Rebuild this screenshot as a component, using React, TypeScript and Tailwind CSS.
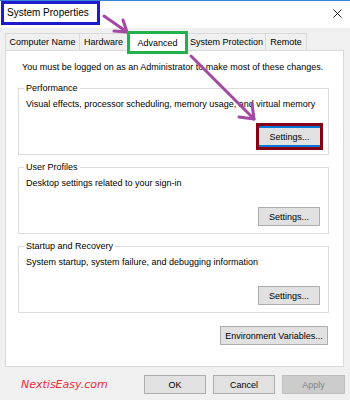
const FONT = "font-['Liberation_Sans',Arial,sans-serif]";

const TABS = [
  { label: 'Computer Name', w: 'w-[75px]' },
  { label: 'Hardware', w: 'w-[49px]' },
];

function Tab({ label, w }: { label: string; w: string }) {
  return (
    <div className={`${w} h-[17px] -ml-px first:ml-0 flex items-center justify-center bg-[#f0f0f0] border border-b-0 border-[#d9d9d9] text-[9px] leading-[12px]`}>
      {label}
    </div>
  );
}

function Button({ label, w = 'w-[62px]', disabled = false }: { label: string; w?: string; disabled?: boolean }) {
  return (
    <div
      className={`${w} h-[19px] flex items-center justify-center border text-[9px] leading-[12px] ${
        disabled ? 'bg-[#cccccc] border-[#bfbfbf] text-[#838383]' : 'bg-[#e1e1e1] border-[#adadad] text-black'
      }`}
    >
      {label}
    </div>
  );
}

function Group({ title, desc, marked = false }: { title: string; desc: string; marked?: boolean }) {
  return (
    <div className="relative w-[311px] h-[67px] border border-[#dcdcdc] pl-[7px] pt-[9px]">
      <span className="absolute left-[5px] top-[-7px] bg-white px-[2px] text-[9px] leading-[12px]">{title}</span>
      <div className="h-[12px] text-[9px] leading-[12px]">{desc}</div>
      {marked ? (
        <div className="flex justify-end mt-[13px] mr-[5px]">
          {/* red annotation box round the focused button */}
          <div className="w-[67px] h-[27px] border-[3px] border-[#880015]">
            <div className="w-full h-full flex items-center justify-center bg-[#e1e1e1] border-y-2 border-[#0078d7] text-[9px] leading-[12px]">
              Settings...
            </div>
          </div>
        </div>
      ) : (
        <div className="flex justify-end mt-[18px] mr-[8px]">
          <Button label="Settings..." />
        </div>
      )}
    </div>
  );
}

export default function App() {
  return (
    <div className={`relative w-[350px] h-[400px] overflow-hidden bg-[#f0f0f0] text-black ${FONT}`}>
      {/* Title bar */}
      <div className="h-[28px] bg-white border-t border-[#3c83d6] flex items-start justify-between">
        <div className="ml-[1px] w-[99px] h-[24px] border-[3px] border-[#1c1ccc] flex items-center pl-[3px] text-[10px] leading-[12px]">
          System Properties
        </div>
        <svg className="mt-[8px] mr-[8px]" width="9" height="9" viewBox="0 0 9 9">
          <path d="M0.5 0.5 L8.5 8.5 M8.5 0.5 L0.5 8.5" stroke="#222" strokeWidth="1" fill="none" />
        </svg>
      </div>

      {/* Tabs */}
      <div className="mt-[3px] ml-[5px] h-[19px] flex items-end">
        {TABS.map((t) => (
          <Tab key={t.label} label={t.label} w={t.w} />
        ))}
        <div className="relative z-10 w-[61px] h-[23px] -mb-[4px] -ml-px bg-white border-[3px] border-[#22b14c] flex items-center justify-center text-[9px] leading-[12px]">
          Advanced
        </div>
        <Tab label="System Protection" w="w-[79px]" />
        <Tab label="Remote" w="w-[42px]" />
      </div>

      {/* Tab panel */}
      <div className="ml-[5px] w-[339px] h-[317px] bg-white border border-[#d9d9d9] pl-[12px] pt-[10px]">
        <div className="ml-[4px] h-[12px] text-[9px] leading-[12px]">
          You must be logged on as an Administrator to make most of these changes.
        </div>
        <div className="mt-[15px] flex flex-col gap-[12px]">
          <Group title="Performance" desc="Visual effects, processor scheduling, memory usage, and virtual memory" marked />
          <Group title="User Profiles" desc="Desktop settings related to your sign-in" />
          <Group title="Startup and Recovery" desc="System startup, system failure, and debugging information" />
        </div>
        <div className="w-[311px] mt-[13px] flex justify-end pr-[1px]">
          <Button label="Environment Variables..." w="w-[108px]" />
        </div>
      </div>

      {/* Dialog buttons */}
      <div className="mt-[8px] flex items-center pl-[21px]">
        <span className="w-[123px] font-['DejaVu_Sans',sans-serif] italic text-[11px] leading-[14px] text-[#ee2a3a]">
          NextisEasy.com
        </span>
        <div className="flex gap-[7px]">
          <Button label="OK" />
          <Button label="Cancel" />
          <Button label="Apply" w="w-[63px]" disabled />
        </div>
      </div>

      {/* Purple annotation arrows */}
      <svg className="absolute inset-0 pointer-events-none" width="350" height="400" viewBox="0 0 350 400">
        <g stroke="#a349a4" strokeWidth="3" strokeLinecap="round" fill="none">
          <path d="M104 16 L127 32" />
          <path d="M127 32 L123 20 M127 32 L114 31" />
          <path d="M191 56 L254 119" />
          <path d="M254 119 L252 104 M254 119 L239 117" />
        </g>
      </svg>
    </div>
  );
}
